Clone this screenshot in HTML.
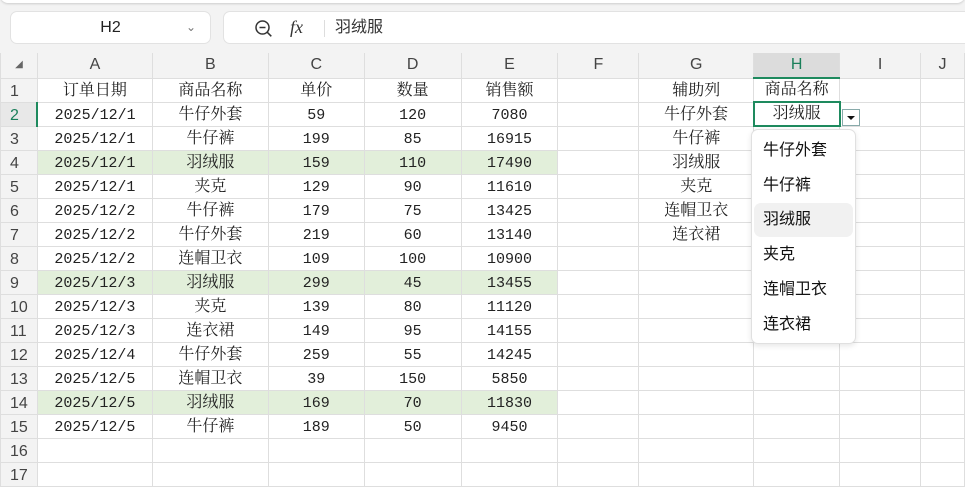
<!DOCTYPE html>
<html><head><meta charset="utf-8"><style>
*{margin:0;padding:0;box-sizing:border-box}
body{width:965px;height:487px;overflow:hidden;background:#f3f3f3;font-family:"Liberation Sans","Noto Sans CJK SC",sans-serif;position:relative}
.top{position:absolute;left:0;top:-6px;width:965px;height:9px;background:#fff;border-radius:0 0 8px 8px;box-shadow:0 1px 2px #ccc}
.nb{position:absolute;left:10px;top:11px;width:201px;height:33px;background:#fff;border:1px solid #e2e2e2;border-radius:7px;font-size:16px;line-height:31px;text-align:center;color:#222}
.nb span{position:absolute;right:14px;top:0;color:#777;font-size:12px}
.fb{position:absolute;left:223px;top:11px;width:750px;height:33px;background:#fff;border:1px solid #e2e2e2;border-radius:7px;font-size:16px;line-height:31px;color:#333}
table{position:absolute;left:0;top:53px;border-collapse:collapse;table-layout:fixed;background:#fff}
td{height:24px;border:1px solid #dedede;text-align:center;font-family:"Liberation Mono","Noto Serif CJK SC",serif;font-size:16px;color:#222;padding:0;white-space:nowrap;overflow:hidden;line-height:21px;vertical-align:bottom}
tr:not(.t):not(.h) td:nth-child(2),tr:not(.t):not(.h) td:nth-child(4),tr:not(.t):not(.h) td:nth-child(5),tr:not(.t):not(.h) td:nth-child(6){font-size:15px}
tr.h td{height:25px;background:#f3f3f3;font-family:"Liberation Sans",sans-serif;font-size:16px;color:#444;border-color:#dedede;border-top:none;line-height:22px;vertical-align:middle}
td.r{background:#f3f3f3;font-family:"Liberation Sans",sans-serif;color:#444;font-size:16px!important;text-align:left;padding-left:9px}
tr.g td.c{background:#e2efda}
.dd{position:absolute;left:751px;top:129px;width:105px;height:215px;background:#fff;border:1px solid #e0e0e0;border-radius:7px;box-shadow:0 2px 6px rgba(0,0,0,.1);font-size:16px;color:#111}
.dd div{position:absolute;left:11px;height:34px;line-height:34px}
</style></head><body>
<div class="top"></div>
<div class="nb">H2<span>&#8964;</span></div>
<div class="fb">
<svg style="position:absolute;left:30px;top:7px" width="20" height="20" viewBox="0 0 20 20"><circle cx="8.5" cy="8.5" r="6.5" fill="none" stroke="#333" stroke-width="1.5"/><path d="M5.5 8.5h6M13.3 13.3l4 4" stroke="#333" stroke-width="1.5"/></svg>
<span style="position:absolute;left:66px;top:0;font-family:'Liberation Serif',serif;font-style:italic;font-size:18px">fx</span>
<span style="position:absolute;left:100px;top:8px;width:1px;height:17px;background:#ddd"></span>
<span style="position:absolute;left:111px;top:0">羽绒服</span>
</div>
<table>
<colgroup><col style="width:37px"><col style="width:115px"><col style="width:116px"><col style="width:96px"><col style="width:97px"><col style="width:97px"><col style="width:81px"><col style="width:115px"><col style="width:86px"><col style="width:81px"><col style="width:44px"></colgroup>
<tr class="h"><td style="font-size:10px;color:#666">◢</td><td>A</td><td>B</td><td>C</td><td>D</td><td>E</td><td>F</td><td>G</td><td style="background:#dcdcdc;color:#1a7f5a;border-bottom:2px solid #1e8a5e">H</td><td>I</td><td>J</td></tr>
<tr class="t"><td class="r">1</td><td class="c">订单日期</td><td class="c">商品名称</td><td class="c">单价</td><td class="c">数量</td><td class="c">销售额</td><td></td><td>辅助列</td><td>商品名称</td><td></td><td></td></tr>
<tr><td class="r" style="border-right:2px solid #1e8a5e;color:#1a7f5a;background:#e8e8e8">2</td><td class="c">2025/12/1</td><td class="c">牛仔外套</td><td class="c">59</td><td class="c">120</td><td class="c">7080</td><td></td><td>牛仔外套</td><td style="border:2px solid #1e8a5e">羽绒服</td><td></td><td></td></tr>
<tr><td class="r">3</td><td class="c">2025/12/1</td><td class="c">牛仔裤</td><td class="c">199</td><td class="c">85</td><td class="c">16915</td><td></td><td>牛仔裤</td><td></td><td></td><td></td></tr>
<tr class="g"><td class="r">4</td><td class="c">2025/12/1</td><td class="c">羽绒服</td><td class="c">159</td><td class="c">110</td><td class="c">17490</td><td></td><td>羽绒服</td><td></td><td></td><td></td></tr>
<tr><td class="r">5</td><td class="c">2025/12/1</td><td class="c">夹克</td><td class="c">129</td><td class="c">90</td><td class="c">11610</td><td></td><td>夹克</td><td></td><td></td><td></td></tr>
<tr><td class="r">6</td><td class="c">2025/12/2</td><td class="c">牛仔裤</td><td class="c">179</td><td class="c">75</td><td class="c">13425</td><td></td><td>连帽卫衣</td><td></td><td></td><td></td></tr>
<tr><td class="r">7</td><td class="c">2025/12/2</td><td class="c">牛仔外套</td><td class="c">219</td><td class="c">60</td><td class="c">13140</td><td></td><td>连衣裙</td><td></td><td></td><td></td></tr>
<tr><td class="r">8</td><td class="c">2025/12/2</td><td class="c">连帽卫衣</td><td class="c">109</td><td class="c">100</td><td class="c">10900</td><td></td><td></td><td></td><td></td><td></td></tr>
<tr class="g"><td class="r">9</td><td class="c">2025/12/3</td><td class="c">羽绒服</td><td class="c">299</td><td class="c">45</td><td class="c">13455</td><td></td><td></td><td></td><td></td><td></td></tr>
<tr><td class="r">10</td><td class="c">2025/12/3</td><td class="c">夹克</td><td class="c">139</td><td class="c">80</td><td class="c">11120</td><td></td><td></td><td></td><td></td><td></td></tr>
<tr><td class="r">11</td><td class="c">2025/12/3</td><td class="c">连衣裙</td><td class="c">149</td><td class="c">95</td><td class="c">14155</td><td></td><td></td><td></td><td></td><td></td></tr>
<tr><td class="r">12</td><td class="c">2025/12/4</td><td class="c">牛仔外套</td><td class="c">259</td><td class="c">55</td><td class="c">14245</td><td></td><td></td><td></td><td></td><td></td></tr>
<tr><td class="r">13</td><td class="c">2025/12/5</td><td class="c">连帽卫衣</td><td class="c">39</td><td class="c">150</td><td class="c">5850</td><td></td><td></td><td></td><td></td><td></td></tr>
<tr class="g"><td class="r">14</td><td class="c">2025/12/5</td><td class="c">羽绒服</td><td class="c">169</td><td class="c">70</td><td class="c">11830</td><td></td><td></td><td></td><td></td><td></td></tr>
<tr><td class="r">15</td><td class="c">2025/12/5</td><td class="c">牛仔裤</td><td class="c">189</td><td class="c">50</td><td class="c">9450</td><td></td><td></td><td></td><td></td><td></td></tr>
<tr><td class="r">16</td><td></td><td></td><td></td><td></td><td></td><td></td><td></td><td></td><td></td><td></td></tr>
<tr><td class="r">17</td><td></td><td></td><td></td><td></td><td></td><td></td><td></td><td></td><td></td><td></td></tr>
</table>
<div style="position:absolute;left:842px;top:109px;width:18px;height:17px;background:#fff;border:1px solid #8aa;"><svg width="16" height="15" viewBox="0 0 16 15"><path d="M4 6h8l-4 4z" fill="#111"/></svg></div>
<div class="dd">
<div style="top:4px">牛仔外套</div>
<div style="top:39px">牛仔裤</div>
<div style="top:73px;left:2px;width:99px;padding-left:9px;background:#f1f1f1;border-radius:7px">羽绒服</div>
<div style="top:108px">夹克</div>
<div style="top:143px">连帽卫衣</div>
<div style="top:178px">连衣裙</div>
</div>
</body></html>
